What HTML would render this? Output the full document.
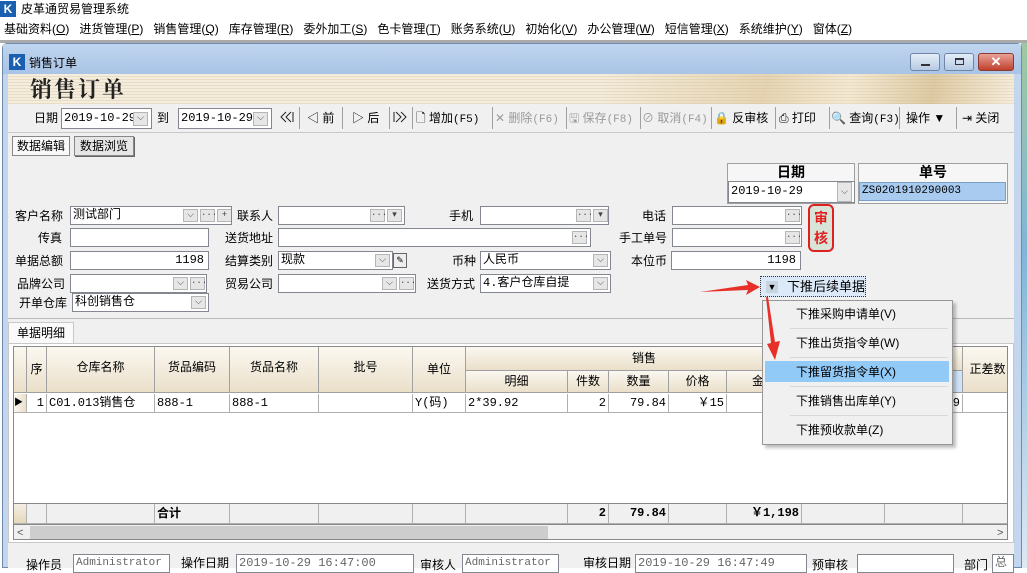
<!DOCTYPE html>
<html><head><meta charset="utf-8">
<style>
*{box-sizing:border-box;margin:0;padding:0}
body{width:1027px;height:568px;overflow:hidden;position:relative;background:#fff;font-family:"Liberation Sans","Noto Sans CJK SC",sans-serif;font-size:12px;line-height:16px;color:#000}
.a{position:absolute;white-space:nowrap}
.in{position:absolute;background:#fff;border:1px solid #828790;height:19px;font-size:12px;line-height:17px;padding-left:2px;font-family:"Liberation Mono","Noto Sans CJK SC",monospace;overflow:hidden}
.b{position:absolute;top:2px;width:15px;height:13px;background:#e6e6e6;border:1px solid #b5b5b5;font-size:9px;line-height:10px;text-align:center;color:#444}
.lb{position:absolute;font-size:12px;line-height:16px;white-space:nowrap}
.tb{position:absolute;top:110px;font-size:12px;line-height:16px;white-space:nowrap}
.sep{position:absolute;top:107px;width:1px;height:22px;background:#a0a0a0}
.hd{position:absolute;background:linear-gradient(#fbf8f1,#eadfc9);border-right:1px solid #a0a0a0;border-bottom:1px solid #a0a0a0;text-align:center;font-size:12px}
.c{position:absolute;border-right:1px solid #b0b0b0;border-bottom:1px solid #b0b0b0;font-family:"Liberation Mono","Noto Sans CJK SC",monospace;font-size:12px;line-height:18px;padding:0 2px;white-space:nowrap;overflow:hidden}
.mi{position:absolute;left:796px;font-size:12px}
.m{font-family:'Liberation Mono',monospace;font-size:11px}
</style></head><body>
<div class="a" style="left:0;top:1px;width:16px;height:16px;background:#1b5fb0;color:#fff;font-weight:bold;font-size:12px;line-height:16px;text-align:center">K</div>
<div class="a" style="left:21px;top:1px;font-size:12px">皮革通贸易管理系统</div>
<div class="a" style="left:4px;top:21px;font-size:12px">基础资料(<u>O</u>)&nbsp;&nbsp; 进货管理(<u>P</u>)&nbsp;&nbsp; 销售管理(<u>Q</u>)&nbsp;&nbsp; 库存管理(<u>R</u>)&nbsp;&nbsp; 委外加工(<u>S</u>)&nbsp;&nbsp; 色卡管理(<u>T</u>)&nbsp;&nbsp; 账务系统(<u>U</u>)&nbsp;&nbsp; 初始化(<u>V</u>)&nbsp;&nbsp; 办公管理(<u>W</u>)&nbsp;&nbsp; 短信管理(<u>X</u>)&nbsp;&nbsp; 系统维护(<u>Y</u>)&nbsp;&nbsp; 窗体(<u>Z</u>)</div>
<div class="a" style="left:0;top:40px;width:1027px;height:3px;background:#aaa"></div>
<div class="a" style="left:1021px;top:43px;width:6px;height:525px;background:linear-gradient(#9fc8a0,#7fb6d8 40%,#dfe9f3)"></div>
<div class="a" style="left:2px;top:43px;width:1020px;height:525px;background:#c3d6ed;border:1px solid #6d8bb0;border-radius:5px 5px 0 0"></div>
<div class="a" style="left:3px;top:44px;width:1018px;height:30px;background:linear-gradient(#c0d5ee,#a9c4e6)"></div>
<div class="a" style="left:9px;top:54px;width:16px;height:16px;background:#1b5fb0;color:#fff;font-weight:bold;font-size:12px;line-height:16px;text-align:center">K</div>
<div class="a" style="left:29px;top:55px;font-size:12px">销售订单</div>
<div class="a" style="left:910px;top:53px;width:30px;height:18px;border:1px solid #6f86a6;border-radius:3px;background:linear-gradient(#e4edf8,#b7cbe4)"><div style="position:absolute;left:10px;top:10px;width:9px;height:2px;background:#333"></div></div>
<div class="a" style="left:944px;top:53px;width:30px;height:18px;border:1px solid #6f86a6;border-radius:3px;background:linear-gradient(#e4edf8,#b7cbe4)"><div style="position:absolute;left:10px;top:4px;width:9px;height:7px;border:1px solid #333;border-top-width:2px"></div></div>
<div class="a" style="left:978px;top:53px;width:36px;height:18px;border:1px solid #8a3a30;border-radius:3px;background:linear-gradient(#e9a296,#c0402c);color:#fff;font-weight:bold;font-size:13px;text-align:center;line-height:16px">✕</div>
<div class="a" style="left:8px;top:74px;width:1006px;height:494px;background:#f0f0f0"></div>
<div class="a" style="left:8px;top:74px;width:1006px;height:30px;background:repeating-linear-gradient(#f4ecdd 0 2px,#e8dcc4 2px 3px);"></div>
<div class="a" style="left:600px;top:74px;width:414px;height:30px;background:linear-gradient(100deg,rgba(255,255,255,0) 0%,rgba(215,190,140,.5) 40%,rgba(240,225,190,.3) 60%,rgba(200,170,110,.5) 80%,rgba(250,240,220,.2) 100%)"></div>
<div class="a" style="left:30px;top:74px;font-family:'Noto Serif CJK SC',serif;font-weight:bold;font-size:22px;line-height:30px;color:#222;letter-spacing:2px">销售订单</div>
<div class="a" style="left:8px;top:104px;width:1006px;height:29px;border-bottom:1px solid #c8c8c8"></div>
<div class="tb" style="left:34px">日期</div>
<div class="in" style="left:61px;top:108px;width:91px;height:21px;line-height:19px">2019-10-29<div class="b" style="left:71px;top:3px;height:14px">⌵</div></div>
<div class="tb" style="left:157px">到</div>
<div class="in" style="left:178px;top:108px;width:94px;height:21px;line-height:19px">2019-10-29<div class="b" style="left:74px;top:3px;height:14px">⌵</div></div>
<svg class="a" style="left:280px;top:111px" width="14" height="12"><path d="M6 1L1 6L6 11M11 1L6 6L11 11M13 1V11" fill="none" stroke="#222"/></svg>
<div class="sep" style="left:299px"></div>
<div class="tb" style="left:307px">◁ 前</div>
<div class="sep" style="left:342px"></div>
<div class="tb" style="left:352px">▷ 后</div>
<div class="sep" style="left:389px"></div>
<svg class="a" style="left:393px;top:111px" width="14" height="12"><path d="M1 1V11M3 1L8 6L3 11M8 1L13 6L8 11" fill="none" stroke="#222"/></svg>
<div class="sep" style="left:412px"></div>
<div class="tb" style="left:416px">🗋 增加<span class="m">(F5)</span></div>
<div class="sep" style="left:492px"></div>
<div class="tb" style="left:495px;color:#9a9a9a">✕ 删除<span class="m">(F6)</span></div>
<div class="sep" style="left:566px"></div>
<div class="tb" style="left:569px;color:#9a9a9a">🖫 保存<span class="m">(F8)</span></div>
<div class="sep" style="left:640px"></div>
<div class="tb" style="left:642px;color:#9a9a9a">⊘ 取消<span class="m">(F4)</span></div>
<div class="sep" style="left:711px"></div>
<div class="tb" style="left:714px">🔒 反审核</div>
<div class="sep" style="left:775px"></div>
<div class="tb" style="left:779px">⎙ 打印</div>
<div class="sep" style="left:829px"></div>
<div class="tb" style="left:831px">🔍 查询<span class="m">(F3)</span></div>
<div class="sep" style="left:899px"></div>
<div class="tb" style="left:906px">操作 ▼</div>
<div class="sep" style="left:956px"></div>
<div class="tb" style="left:962px">⇥ 关闭</div>
<div class="a" style="left:12px;top:136px;width:58px;height:20px;border:1px solid #888;background:#f8f8f8;font-size:12px;line-height:18px;text-align:center">数据编辑</div>
<div class="a" style="left:74px;top:136px;width:60px;height:20px;border:1px solid #888;background:#e6e6e6;font-size:12px;line-height:18px;text-align:center;box-shadow:1px 1px 0 #666">数据浏览</div>
<div class="a" style="left:727px;top:163px;width:128px;height:41px;border:1px solid #a0a0a0;background:#f6f6f6"></div>
<div class="a" style="left:728px;top:164px;width:126px;text-align:center;font-weight:bold;font-size:14px;line-height:17px">日期</div>
<div class="in" style="left:728px;top:181px;width:127px;height:22px;line-height:18px">2019-10-29<div class="b" style="left:108px;top:0;height:20px;line-height:18px">⌵</div></div>
<div class="a" style="left:858px;top:163px;width:150px;height:41px;border:1px solid #a0a0a0;background:#f6f6f6"></div>
<div class="a" style="left:858px;top:164px;width:150px;text-align:center;font-weight:bold;font-size:14px;line-height:17px">单号</div>
<div class="a" style="left:859px;top:182px;width:147px;height:19px;background:#a8cbef;border:1px solid #7aa0c8;font-family:'Liberation Mono',monospace;font-size:11px;line-height:17px;padding-left:2px">ZS0201910290003</div>

<div class="lb" style="left:15px;top:208px">客户名称</div>
<div class="in" style="left:70px;top:206px;width:162px">测试部门<div class="b" style="left:112px">⌵</div><div class="b" style="left:129px">···</div><div class="b" style="left:146px">+</div></div>
<div class="lb" style="left:237px;top:208px">联系人</div>
<div class="in" style="left:278px;top:206px;width:127px"><div class="b" style="left:91px">···</div><div class="b" style="left:108px">▾</div></div>
<div class="lb" style="left:449px;top:208px">手机</div>
<div class="in" style="left:480px;top:206px;width:129px"><div class="b" style="left:95px">···</div><div class="b" style="left:112px">▾</div></div>
<div class="lb" style="left:642px;top:208px">电话</div>
<div class="in" style="left:672px;top:206px;width:130px"><div class="b" style="left:112px">···</div></div>
<div class="a" style="left:808px;top:204px;width:26px;height:48px;border:2px solid #e02020;border-radius:6px;background:#d8e4d8;color:#e02020;font-weight:bold;font-size:14px;line-height:20px;text-align:center;white-space:normal;padding-top:2px">审<br>核</div>

<div class="lb" style="left:38px;top:230px">传真</div>
<div class="in" style="left:70px;top:228px;width:139px"></div>
<div class="lb" style="left:225px;top:230px">送货地址</div>
<div class="in" style="left:278px;top:228px;width:313px"><div class="b" style="left:293px">···</div></div>
<div class="lb" style="left:619px;top:230px">手工单号</div>
<div class="in" style="left:672px;top:228px;width:130px"><div class="b" style="left:112px">···</div></div>

<div class="lb" style="left:15px;top:253px">单据总额</div>
<div class="in" style="left:70px;top:251px;width:139px;text-align:right;padding-right:4px">1198</div>
<div class="lb" style="left:225px;top:253px">结算类别</div>
<div class="in" style="left:278px;top:251px;width:115px">现款<div class="b" style="left:96px">⌵</div></div>
<div class="a" style="left:393px;top:253px;width:14px;height:15px;border:1px solid #666;background:#eee;font-size:9px;line-height:12px;text-align:center">✎</div>
<div class="lb" style="left:452px;top:253px">币种</div>
<div class="in" style="left:480px;top:251px;width:131px">人民币<div class="b" style="left:112px">⌵</div></div>
<div class="lb" style="left:631px;top:253px">本位币</div>
<div class="in" style="left:671px;top:251px;width:130px;text-align:right;padding-right:4px">1198</div>

<div class="lb" style="left:17px;top:276px">品牌公司</div>
<div class="in" style="left:70px;top:274px;width:137px"><div class="b" style="left:102px">⌵</div><div class="b" style="left:119px">···</div></div>
<div class="lb" style="left:225px;top:276px">贸易公司</div>
<div class="in" style="left:278px;top:274px;width:138px"><div class="b" style="left:103px">⌵</div><div class="b" style="left:120px">···</div></div>
<div class="lb" style="left:427px;top:276px">送货方式</div>
<div class="in" style="left:480px;top:274px;width:131px">4.客户仓库自提<div class="b" style="left:112px">⌵</div></div>

<div class="lb" style="left:19px;top:295px">开单仓库</div>
<div class="in" style="left:72px;top:293px;width:137px">科创销售仓<div class="b" style="left:118px">⌵</div></div>

<div class="a" style="left:760px;top:276px;width:106px;height:21px;border:1px dotted #333;background:#dbe9f8;font-size:13px;line-height:19px;padding-left:26px">下推后续单据</div>
<div class="a" style="left:766px;top:281px;width:12px;height:12px;background:#c8d4e0;font-size:9px;line-height:12px;text-align:center">▼</div>

<div class="a" style="left:8px;top:318px;width:1006px;height:1px;background:#b8b8b8"></div>
<div class="a" style="left:8px;top:322px;width:66px;height:22px;border:1px solid #c8c8c8;border-bottom:none;background:#fafafa;font-size:12px;line-height:20px;text-align:center">单据明细</div>
<div class="a" style="left:8px;top:343px;width:1006px;height:200px;border:1px solid #c8c8c8;background:#fff"></div>
<div class="a" style="left:13px;top:346px;width:995px;height:194px;background:#fff;border:1px solid #888;overflow:hidden">
<div class="hd" style="left:0;top:0;width:13px;height:46px"></div>
<div class="hd" style="left:13px;top:0;width:20px;height:46px;line-height:44px">序</div>
<div class="hd" style="left:33px;top:0;width:108px;height:46px;line-height:40px">仓库名称</div>
<div class="hd" style="left:141px;top:0;width:75px;height:46px;line-height:40px">货品编码</div>
<div class="hd" style="left:216px;top:0;width:89px;height:46px;line-height:40px">货品名称</div>
<div class="hd" style="left:305px;top:0;width:94px;height:46px;line-height:40px">批号</div>
<div class="hd" style="left:399px;top:0;width:53px;height:46px;line-height:44px">单位</div>
<div class="hd" style="left:452px;top:0;width:497px;height:24px;line-height:22px;padding-right:140px">销售</div>
<div class="hd" style="left:452px;top:24px;width:102px;height:22px;line-height:20px">明细</div>
<div class="hd" style="left:554px;top:24px;width:41px;height:22px;line-height:20px">件数</div>
<div class="hd" style="left:595px;top:24px;width:60px;height:22px;line-height:20px">数量</div>
<div class="hd" style="left:655px;top:24px;width:58px;height:22px;line-height:20px">价格</div>
<div class="hd" style="left:713px;top:24px;width:75px;height:22px;line-height:20px">金额</div>
<div class="hd" style="left:788px;top:24px;width:83px;height:22px;background:#cfe3f8"></div>
<div class="hd" style="left:871px;top:24px;width:78px;height:22px;background:#cfe3f8"></div>
<div class="hd" style="left:949px;top:0;width:50px;height:46px;line-height:44px">正差数</div>
<div class="c" style="left:0;top:47px;width:13px;height:19px;background:linear-gradient(90deg,#fbf8f1,#eadfc9);font-size:9px;padding:0">▶</div>
<div class="c" style="left:13px;top:47px;width:20px;height:19px;text-align:right">1</div>
<div class="c" style="left:33px;top:47px;width:108px;height:19px">C01.013销售仓</div>
<div class="c" style="left:141px;top:47px;width:75px;height:19px">888-1</div>
<div class="c" style="left:216px;top:47px;width:89px;height:19px">888-1</div>
<div class="c" style="left:305px;top:47px;width:94px;height:19px"></div>
<div class="c" style="left:399px;top:47px;width:53px;height:19px">Y(码)</div>
<div class="c" style="left:452px;top:47px;width:102px;height:19px">2*39.92</div>
<div class="c" style="left:554px;top:47px;width:41px;height:19px;text-align:right">2</div>
<div class="c" style="left:595px;top:47px;width:60px;height:19px;text-align:right">79.84</div>
<div class="c" style="left:655px;top:47px;width:58px;height:19px;text-align:right">￥15</div>
<div class="c" style="left:713px;top:47px;width:75px;height:19px;text-align:right">1,198</div>
<div class="c" style="left:788px;top:47px;width:83px;height:19px"></div>
<div class="c" style="left:871px;top:47px;width:78px;height:19px;text-align:right">9</div>
<div class="c" style="left:949px;top:47px;width:50px;height:19px"></div>
<div class="a" style="left:0;top:156px;width:995px;height:22px;background:#f0f0f0;border-top:1px solid #888;border-bottom:1px solid #888"></div>
<div class="c" style="left:0;top:157px;width:13px;height:20px;background:linear-gradient(#f4efe4,#e5d7bb)"></div>
<div class="c" style="left:13px;top:157px;width:20px;height:20px"></div>
<div class="c" style="left:33px;top:157px;width:108px;height:20px"></div>
<div class="c" style="left:141px;top:157px;width:75px;height:20px;font-weight:bold;font-family:'Noto Sans CJK SC',sans-serif">合计</div>
<div class="c" style="left:216px;top:157px;width:89px;height:20px"></div>
<div class="c" style="left:305px;top:157px;width:94px;height:20px"></div>
<div class="c" style="left:399px;top:157px;width:53px;height:20px"></div>
<div class="c" style="left:452px;top:157px;width:102px;height:20px"></div>
<div class="c" style="left:554px;top:157px;width:41px;height:20px;text-align:right;font-weight:bold">2</div>
<div class="c" style="left:595px;top:157px;width:60px;height:20px;text-align:right;font-weight:bold">79.84</div>
<div class="c" style="left:655px;top:157px;width:58px;height:20px"></div>
<div class="c" style="left:713px;top:157px;width:75px;height:20px;text-align:right;font-weight:bold">￥1,198</div>
<div class="c" style="left:788px;top:157px;width:83px;height:20px"></div>
<div class="c" style="left:871px;top:157px;width:78px;height:20px"></div>
<div class="c" style="left:949px;top:157px;width:50px;height:20px"></div>
<div class="a" style="left:0;top:178px;width:995px;height:16px;background:#f0f0f0"></div>
<div class="a" style="left:16px;top:179px;width:518px;height:14px;background:#cdcdcd"></div>
<div class="a" style="left:3px;top:178px;font-size:11px;color:#555">&lt;</div>
<div class="a" style="left:983px;top:178px;font-size:11px;color:#555">&gt;</div>
</div>
<div class="lb" style="left:26px;top:557px">操作员</div>
<div class="in" style="left:73px;top:554px;width:97px;color:#666;font-size:11px">Administrator</div>
<div class="lb" style="left:181px;top:555px">操作日期</div>
<div class="in" style="left:236px;top:554px;width:178px;color:#666">2019-10-29 16:47:00</div>
<div class="lb" style="left:420px;top:557px">审核人</div>
<div class="in" style="left:462px;top:554px;width:97px;color:#666;font-size:11px">Administrator</div>
<div class="lb" style="left:583px;top:555px">审核日期</div>
<div class="in" style="left:635px;top:554px;width:172px;color:#666">2019-10-29 16:47:49</div>
<div class="lb" style="left:812px;top:557px">预审核</div>
<div class="in" style="left:857px;top:554px;width:97px"></div>
<div class="lb" style="left:964px;top:557px">部门</div>
<div class="in" style="left:992px;top:554px;width:22px;color:#666">总</div>
<div class="a" style="left:762px;top:300px;width:191px;height:145px;background:#f0f0f0;border:1px solid #979797;box-shadow:3px 3px 3px rgba(0,0,0,.25)"></div>
<div class="a" style="left:790px;top:328px;width:158px;height:1px;background:#d8d8d8"></div>
<div class="a" style="left:790px;top:357px;width:158px;height:1px;background:#d8d8d8"></div>
<div class="a" style="left:765px;top:361px;width:184px;height:21px;background:#91c9f7"></div>
<div class="a" style="left:790px;top:386px;width:158px;height:1px;background:#d8d8d8"></div>
<div class="a" style="left:790px;top:415px;width:158px;height:1px;background:#d8d8d8"></div>
<div class="mi" style="top:306px">下推采购申请单(V)</div>
<div class="mi" style="top:335px">下推出货指令单(W)</div>
<div class="mi" style="top:364px">下推留货指令单(X)</div>
<div class="mi" style="top:393px">下推销售出库单(Y)</div>
<div class="mi" style="top:422px">下推预收款单(Z)</div>
<svg class="a" style="left:0;top:0" width="1027" height="568">
<polygon points="700,292 748,285 746,280 760,287 746,295 748,290" fill="#e8302a"/>
<polygon points="768,297 775,342 780,341 775,360 767,344 771,343 766,297" fill="#e8302a"/>
</svg>
</body></html>
